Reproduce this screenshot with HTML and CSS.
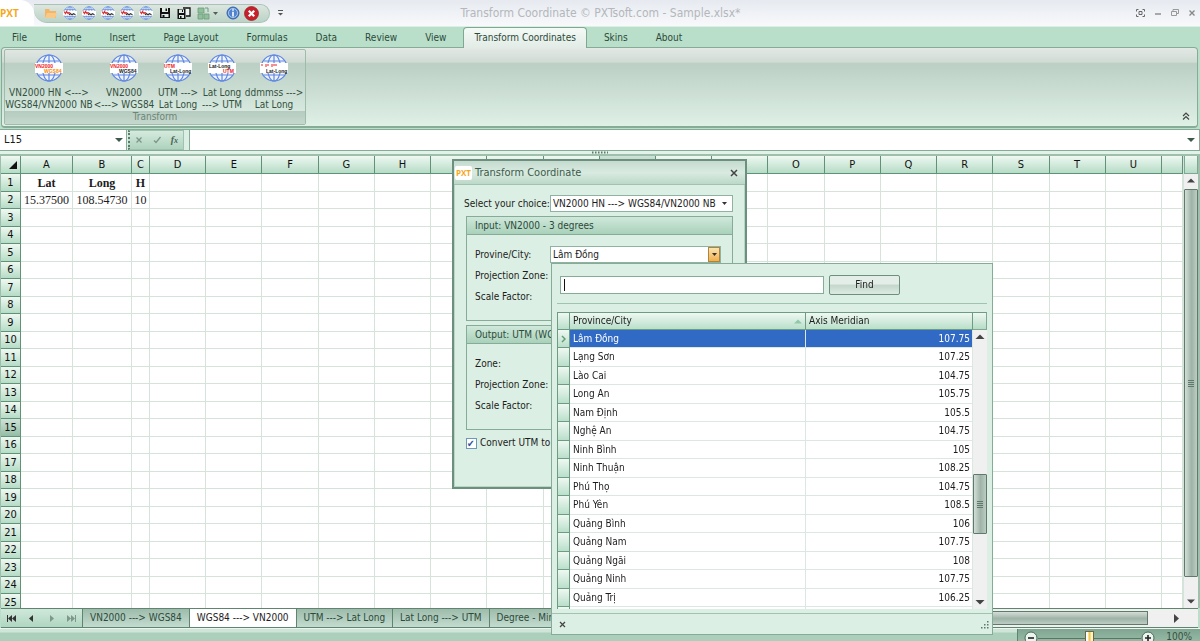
FILE: index.html
```html
<!DOCTYPE html>
<html lang="en">
<head>
    <meta charset="UTF-8">
    <meta name="viewport" content="width=device-width, initial-scale=1.0">
    <title>Transform Coordinate - Sample.xlsx</title>
    <link rel="stylesheet" href="styles.css">
</head>
<body>

    <!-- Shared icon shapes -->
    <svg class="defs" width="0" height="0">
        <symbol id="globe" viewBox="0 0 28 28">
            <circle cx="14" cy="14" r="13" fill="#eef4ff"/>
            <g fill="none" stroke="#5f86e0" stroke-width="1.2">
                <circle cx="14" cy="14" r="13"/>
                <ellipse cx="14" cy="14" rx="6.5" ry="13"/>
                <path d="M14 1v26M1 14h26M3.5 7h21M3.5 21h21"/>
            </g>
            <rect x="0" y="9" width="28" height="10" fill="#fff"/>
        </symbol>
        <symbol id="globe-small" viewBox="0 0 14 14">
            <circle cx="7" cy="7" r="6.3" fill="#eaf1fc"/>
            <g fill="none" stroke="#6d93dc" stroke-width=".8">
                <circle cx="7" cy="7" r="6.3"/>
                <ellipse cx="7" cy="7" rx="3" ry="6.3"/>
                <path d="M7 .7v12.6M1.7 3.5h10.6M1.7 10.5h10.6"/>
            </g>
            <rect x="0" y="5" width="14" height="4.5" fill="#fff"/>
            <path d="M1 5.5l1.5 2 1-2 1.5 2 1-1 1.5 1" fill="none" stroke="#d33" stroke-width="1.2"/>
            <path d="M6 8.8l1.5-1 1.5 1 1.5-1 2 1" fill="none" stroke="#333" stroke-width="1.2"/>
        </symbol>
    </svg>

    <!-- Title bar -->
    <header class="titlebar">
        <div class="logo">PXT</div>
        <div class="quick">
            <button aria-label="Open"><svg width="13" height="14" viewBox="0 0 13 14"><path d="M1 3h4l1 2h6v7H1z" fill="#f5b566"/><path d="M1 12l2-5h10l-2 5z" fill="#f9c988"/></svg></button>
            <button aria-label="VN2000 HN"><svg width="14" height="14"><use href="#globe-small"/></svg></button>
            <button aria-label="VN2000"><svg width="14" height="14"><use href="#globe-small"/></svg></button>
            <button aria-label="UTM"><svg width="14" height="14"><use href="#globe-small"/></svg></button>
            <button aria-label="Lat Long"><svg width="14" height="14"><use href="#globe-small"/></svg></button>
            <button aria-label="ddmmss"><svg width="14" height="14"><use href="#globe-small"/></svg></button>
            <button aria-label="Save"><svg width="12" height="12" viewBox="0 0 12 12"><path d="M1 1h10v10H1z" fill="#111"/><path d="M3 1h6v4H3zM2.500 7h7v3h-7z" fill="#dfeae4"/><path d="M6.500 1.500h1.500v2.500H6.500zM3.500 8h2v2h-2z" fill="#111"/></svg></button>
            <button aria-label="Save as"><svg width="14" height="13" viewBox="0 0 14 13"><path d="M6 1h7v8H9" fill="#eef4f0" stroke="#111" stroke-width="1.300"/><path d="M.5 2h8v10h-8z" fill="#111"/><path d="M2 2.500h5V6H2zM2 8h5v3H2z" fill="#dfeae4"/><path d="M5 3h1v2H5zM3 9h1.500v2H3z" fill="#111"/></svg></button>
            <button class="wide" aria-label="Skins"><svg width="22" height="14" viewBox="0 0 22 14"><path d="M1 2h6v5H1zM1 8h5v5H1zM7 8h5v5H7z" fill="#8fbf9c" stroke="#6c9c7a" stroke-width=".8"/><path d="M8 2l3 0 0 4" fill="none" stroke="#6c9c7a"/><path d="M16 6h5l-2.500 3z" fill="#4b6355"/></svg></button>
            <button aria-label="About"><svg width="14" height="14" viewBox="0 0 14 14"><circle cx="7" cy="7" r="6" fill="#4f83cf" stroke="#3562a8"/><circle cx="7" cy="7" r="4.500" fill="none" stroke="#c5d8f3" stroke-width=".8"/><path d="M6.200 3.300h1.600v1.500H6.200zM6.200 5.800h1.600v4.700H6.200z" fill="#fff"/></svg></button>
            <button aria-label="Exit"><svg width="15" height="15" viewBox="0 0 15 15"><circle cx="7.500" cy="7.500" r="7" fill="#c8202a" stroke="#8e2025" stroke-width=".7"/><path d="M4.800 4.800l5.400 5.400M10.200 4.800l-5.400 5.400" stroke="#fff" stroke-width="2.300"/></svg></button>
        </div>
        <button class="more" aria-label="Customize"><svg width="7" height="8" viewBox="0 0 7 8"><path d="M1 1.500h5" stroke="#555"/><path d="M1 4h5L3.500 6.500z" fill="#555"/></svg></button>
        <h1>Transform Coordinate © PXTsoft.com - Sample.xlsx*</h1>
        <div class="winbtns">
            <button aria-label="Full screen"><svg width="9" height="8" viewBox="0 0 9 8"><path d="M.5 2.500v-2h2M6.500.5h2v2M8.500 5.500v2h-2M2.500 7.500h-2v-2M3 2.500h3v3H3z" fill="none" stroke="#666"/></svg></button>
            <button aria-label="Minimize"><svg width="8" height="8" viewBox="0 0 8 8"><path d="M1 5h6" stroke="#888" stroke-width="1.400"/></svg></button>
            <button aria-label="Restore"><svg width="8" height="8" viewBox="0 0 8 8"><path d="M.5 2.500h5v4h-5zM2 2.500v-2h5.500v4h-2" fill="none" stroke="#999"/></svg></button>
            <button aria-label="Close"><svg width="8" height="8" viewBox="0 0 8 8"><path d="M1.500 1.500l5 5M6.500 1.500l-5 5" stroke="#888" stroke-width="1.400"/></svg></button>
        </div>
    </header>

    <!-- Ribbon tabs -->
    <nav class="tabs">
        <button>File</button>
        <button>Home</button>
        <button>Insert</button>
        <button>Page Layout</button>
        <button>Formulas</button>
        <button>Data</button>
        <button>Review</button>
        <button>View</button>
        <button class="active">Transform Coordinates</button>
        <button>Skins</button>
        <button>About</button>
    </nav>

    <!-- Ribbon -->
    <section class="ribbon">
        <div class="group">
            <div class="tools">
                <button class="tool t1">
                    <svg width="28" height="28" viewBox="0 0 28 28"><use href="#globe"/><text x="0" y="14" fill="#e22">VN2000</text><text x="9" y="19" fill="#f80">WGS84</text></svg>
                    <span>VN2000 HN &lt;---&gt;<br>WGS84/VN2000 NB</span>
                </button>
                <button class="tool t2">
                    <svg width="28" height="28" viewBox="0 0 28 28"><use href="#globe"/><text x="0" y="14" fill="#e22">VN2000</text><text x="9" y="19" fill="#222">WGS84</text></svg>
                    <span>VN2000<br>&lt;---&gt; WGS84</span>
                </button>
                <button class="tool t3">
                    <svg width="28" height="28" viewBox="0 0 28 28"><use href="#globe"/><text x="0" y="14" fill="#e22">UTM</text><text x="6" y="19" fill="#222">Lat-Long</text></svg>
                    <span>UTM ---&gt;<br>Lat Long</span>
                </button>
                <button class="tool t3">
                    <svg width="28" height="28" viewBox="0 0 28 28"><use href="#globe"/><text x="1" y="14" fill="#222">Lat-Long</text><text x="15" y="19" fill="#e22">UTM</text></svg>
                    <span>Lat Long<br>---&gt; UTM</span>
                </button>
                <button class="tool t4">
                    <svg width="28" height="28" viewBox="0 0 28 28"><use href="#globe"/><path d="M2 10v2M6 10v3M8 10v2M12 10v3M14 10v2M16 10v2" stroke="#e22"/><text x="6" y="19" fill="#222">Lat-Long</text></svg>
                    <span>ddmmss ---&gt;<br>Lat Long</span>
                </button>
            </div>
            <div class="caption">Transform</div>
        </div>
        <button class="collapse" aria-label="Collapse ribbon"><svg width="8" height="8" viewBox="0 0 8 8"><path d="M1 4l3-3 3 3M1 7.500l3-3 3 3" fill="none" stroke="#444" stroke-width="1.200"/></svg></button>
    </section>

    <!-- Formula bar -->
    <div class="formula">
        <div class="namebox">
            <input type="text" value="L15" aria-label="Name box">
            <svg width="8" height="5" viewBox="0 0 8 5"><path d="M0 0h8L4 4z" fill="#3d5a4a"/></svg>
        </div>
        <div class="fx">
            <button aria-label="Cancel"><svg width="8" height="8" viewBox="0 0 8 8"><path d="M1.500 1.500l5 5M6.500 1.500l-5 5" stroke="#7d9588" stroke-width="1.300"/></svg></button>
            <button aria-label="Enter"><svg width="8" height="8" viewBox="0 0 8 8"><path d="M1 4.500l2 2L7.500 1" fill="none" stroke="#7d9588" stroke-width="1.300"/></svg></button>
            <button class="fn" aria-label="Insert function">f<small>x</small></button>
        </div>
        <div class="expr">
            <input type="text" aria-label="Formula">
            <svg width="8" height="5" viewBox="0 0 8 5"><path d="M0 0h8L4 4z" fill="#3d5a4a"/></svg>
        </div>
    </div>
    <div class="splitter"><svg width="18" height="3" viewBox="0 0 18 3"><path d="M1 1.500h16" stroke="#5d7a6a" stroke-width="2" stroke-dasharray="1.500 1.500"/></svg></div>

    <!-- Sheet -->
    <main class="sheet">
        <div class="grid">
            <table>
                <colgroup id="cols"><col class="c-row"><col class="c-a"><col class="c-b"><col class="c-c"></colgroup>
                <thead><tr id="letters"><th class="corner"><svg width="8" height="8" viewBox="0 0 8 8"><path d="M8 0v8H0z" fill="#111"/></svg></th></tr></thead>
                <tbody id="cells"></tbody>
            </table>
        </div>
        <div class="vscroll">
            <div class="vhead"></div>
            <svg width="14" height="15" viewBox="0 0 14 15"><path d="M3 8.500h8L7 4.500z" fill="#444"/></svg>
            <div class="vthumb"></div>
            <svg class="down" width="14" height="10" viewBox="0 0 14 10"><path d="M3 3.500h8L7 7.500z" fill="#444"/></svg>
        </div>
    </main>

    <!-- Sheet tabs -->
    <div class="sheetbar">
        <div class="arrows">
            <button aria-label="First"><svg width="9" height="7" viewBox="0 0 9 7"><path d="M.5 0v7" stroke="#333"/><path d="M5 0v7L1 3.500zM9 0v7L5 3.500z" fill="#333"/></svg></button>
            <button aria-label="Previous"><svg width="9" height="7" viewBox="0 0 9 7"><path d="M6 0v7L2 3.500z" fill="#333"/></svg></button>
            <button aria-label="Next"><svg width="9" height="7" viewBox="0 0 9 7"><path d="M3 0v7l4-3.500z" fill="#7f978a"/></svg></button>
            <button aria-label="Last"><svg width="9" height="7" viewBox="0 0 9 7"><path d="M8.500 0v7" stroke="#7f978a"/><path d="M0 0v7l4-3.500zM4 0v7l4-3.500z" fill="#7f978a"/></svg></button>
        </div>
        <button class="stab">VN2000 ---&gt; WGS84</button>
        <button class="stab active">WGS84 ---&gt; VN2000</button>
        <button class="stab">UTM ---&gt; Lat Long</button>
        <button class="stab">Lat Long ---&gt; UTM</button>
        <button class="stab">Degree - Minute</button>
        <div class="hscroll">
            <div class="hthumb"></div>
            <svg width="6" height="9" viewBox="0 0 6 9"><path d="M1 0v9l5-4.500z" fill="#444"/></svg>
        </div>
    </div>

    <!-- Status bar -->
    <footer class="status">
        <div class="zoom">
            <button aria-label="Zoom out"><svg width="14" height="14" viewBox="0 0 14 14"><circle cx="7" cy="7" r="6" fill="#eaf5ee" stroke="#4c6b5a"/><path d="M4 7h6" stroke="#222" stroke-width="1.600"/></svg></button>
            <input type="range" min="0" max="200" value="100" aria-label="Zoom">
            <button aria-label="Zoom in"><svg width="14" height="14" viewBox="0 0 14 14"><circle cx="7" cy="7" r="6" fill="#eaf5ee" stroke="#4c6b5a"/><path d="M4 7h6M7 4v6" stroke="#222" stroke-width="1.600"/></svg></button>
            <span>100%</span>
        </div>
    </footer>

    <!-- Transform dialog -->
    <div class="dialog">
        <div class="dtitle">
            <span class="badge">PXT</span>
            <h2>Transform Coordinate</h2>
            <button aria-label="Close dialog"><svg width="8" height="8" viewBox="0 0 8 8"><path d="M1 1l6 6M7 1L1 7" stroke="#444" stroke-width="1.500"/></svg></button>
        </div>
        <div class="dbody">
            <div class="choice">
                <label for="choice">Select your choice:</label>
                <div class="combo">
                    <select id="choice"><option>VN2000 HN ---&gt; WGS84/VN2000 NB</option></select>
                    <svg width="5" height="3" viewBox="0 0 5 3"><path d="M0 0h5L2.500 3z" fill="#333"/></svg>
                </div>
            </div>
            <section class="box">
                <h3>Input: VN2000 - 3 degrees</h3>
                <div class="row">
                    <label for="city">Provine/City:</label>
                    <div class="combo open">
                        <select id="city"><option>Lâm Đồng</option></select>
                        <i><svg width="5" height="3" viewBox="0 0 5 3"><path d="M0 0h5L2.500 3z" fill="#333"/></svg></i>
                    </div>
                </div>
                <div class="row">Projection Zone:</div>
                <div class="row">Scale Factor:</div>
            </section>
            <section class="box">
                <h3>Output: UTM (WGS84)</h3>
                <div class="row">Zone:</div>
                <div class="row">Projection Zone:</div>
                <div class="row">Scale Factor:</div>
            </section>
            <label class="check"><input type="checkbox" checked>Convert UTM to Lat Long</label>
        </div>
    </div>

    <!-- Province lookup -->
    <div class="popup">
        <div class="search">
            <input type="text" aria-label="Search" autofocus>
            <button>Find</button>
        </div>
        <div class="list">
            <table>
                <colgroup><col class="p-mark"><col class="p-name"><col></colgroup>
                <thead><tr>
                    <th></th>
                    <th><div class="sort">Province/City<svg width="8" height="5" viewBox="0 0 8 5"><path d="M0 4.500h8L4 .5z" fill="#8fcaa8"/></svg></div></th>
                    <th>Axis Meridian</th>
                </tr></thead>
                <tbody id="provinces"></tbody>
            </table>
            <div class="pscroll">
                <div class="phead"></div>
                <svg width="14" height="12" viewBox="0 0 14 12"><path d="M2.500 9h9L7 4.500z" fill="#444"/></svg>
                <div class="pthumb"></div>
                <svg class="down" width="14" height="8" viewBox="0 0 14 8"><path d="M2.500 1h9L7 5.500z" fill="#444"/></svg>
            </div>
        </div>
        <div class="pfoot">
            <button aria-label="Clear"><svg width="7" height="7" viewBox="0 0 7 7"><path d="M1 1l5 5M6 1L1 6" stroke="#444" stroke-width="1.200"/></svg></button>
            <svg width="9" height="9" viewBox="0 0 9 9"><path d="M7 1h1.500v1.500H7zM4 4h1.500v1.500H4zM7 4h1.500v1.500H7zM1 7h1.500v1.500H1zM4 7h1.500v1.500H4zM7 7h1.500v1.500H7z" fill="#5d7a6a"/></svg>
        </div>
    </div>

    <script src="script.js"></script>
</body>
</html>
```
FILE: script.js
```js
const letters = "ABCDEFGHIJKLMNOPQRSTU".split("");
const values = {
    1: ["Lat", "Long", "H"],
    2: ["15.37500", "108.54730", "10"]
};
const provinces = [
    ["Lâm Đồng", "107.75"], ["Lạng Sơn", "107.25"], ["Lào Cai", "104.75"],
    ["Long An", "105.75"], ["Nam Định", "105.5"], ["Nghệ An", "104.75"],
    ["Ninh Bình", "105"], ["Ninh Thuận", "108.25"], ["Phú Thọ", "104.75"],
    ["Phú Yên", "108.5"], ["Quảng Bình", "106"], ["Quảng Nam", "107.75"],
    ["Quảng Ngãi", "108"], ["Quảng Ninh", "107.75"], ["Quảng Trị", "106.25"],
    ["", ""]
];

// Column headers
const head = document.getElementById("letters");
const cols = document.getElementById("cols");
letters.forEach((letter, i) => {
    const th = document.createElement("th");
    th.textContent = letter;
    if (letter === "L") th.className = "current";
    head.appendChild(th);
    if (i > 2) cols.appendChild(document.createElement("col"));
});
const last = document.createElement("col");
last.className = "c-last";
cols.appendChild(last);
head.appendChild(document.createElement("th"));

// Sheet rows
let html = "";
for (let r = 1; r <= 25; r++) {
    html += `<tr><th${r === 15 ? ' class="current"' : ""}>${r}</th>`;
    for (let c = 0; c <= letters.length; c++) {
        html += `<td>${(values[r] && values[r][c]) || ""}</td>`;
    }
    html += "</tr>";
}
document.getElementById("cells").innerHTML = html;

// Province list
const arrow = '<svg width="5" height="8" viewBox="0 0 5 8"><path d="M1 1l3 3-3 3" fill="none" stroke="#5f9a78" stroke-width="1.400"/></svg>';
document.getElementById("provinces").innerHTML = provinces.map((p, i) =>
    `<tr${i === 0 ? ' class="selected"' : ""}><th>${i === 0 ? arrow : ""}</th><td>${p[0]}</td><td>${p[1]}</td></tr>`
).join("");

document.querySelector(".search input").focus();
```
FILE: styles.css
```css
* {
    box-sizing: border-box;
}
body {
    margin: 0;
    height: 100vh;
    overflow: hidden;
    display: flex;
    flex-direction: column;
    background: #b9dfca;
    font-family: "DejaVu Sans Condensed", "Noto Sans", sans-serif;
    font-size: 10px;
    line-height: 12px;
    color: #1c1c1c;
}
button, input, select {
    font: inherit;
    color: inherit;
    background: none;
    border: none;
    padding: 0;
    margin: 0;
    outline: none;
}
svg {
    display: block;
    flex: none;
}
h1, h2, h3 {
    margin: 0;
    font-size: 10px;
    font-weight: normal;
}
.defs {
    position: absolute;
}

/* Title bar */
.titlebar {
    flex: none;
    height: 27px;
    display: flex;
    align-items: center;
    background: linear-gradient(#e6eaf0, #f8f9fb);
    border-bottom: 1px solid #dcefe4;
}
.logo {
    width: 34px;
    height: 26px;
    line-height: 26px;
    background: #fff;
    border-radius: 0 14px 0 0;
    color: #f5a81c;
    font-weight: bold;
    font-family: "Open Sans", sans-serif;
}
.quick {
    height: 19px;
    display: flex;
    align-items: center;
    gap: 4px;
    padding: 0 10px 0 9px;
    border: 1px solid #a9c4b5;
    border-left: none;
    border-radius: 0 10px 10px 14px;
    background: linear-gradient(#dbe6e0, #bcd3c6);
}
.quick button {
    width: 15px;
    display: flex;
    justify-content: center;
}
.quick .wide {
    width: 26px;
}
.more {
    margin-left: 7px;
}
.titlebar h1 {
    flex: 1;
    padding-right: 219px;
    text-align: center;
    font-size: 12px;
    color: #b4b7bb;
}
.winbtns {
    display: flex;
    gap: 9px;
    padding-right: 4px;
}

/* Ribbon tabs */
.tabs {
    flex: none;
    height: 20px;
    display: flex;
    padding-left: 1px;
    background: #b9dfca;
}
.tabs button {
    height: 21px;
    margin-right: 6px;
    padding: 0 10px;
    border: 1px solid transparent;
    border-bottom: none;
    color: #2c4a3a;
    position: relative;
    z-index: 1;
}
.tabs .active {
    border-color: #7fa892;
    border-radius: 4px 4px 0 0;
    background: linear-gradient(#f4faf6, #e2ebe5);
}

/* Ribbon */
.ribbon {
    flex: none;
    height: 81px;
    margin: 0 2px 1px 1px;
    padding: 1px 7px 1px 2px;
    display: flex;
    justify-content: space-between;
    align-items: flex-end;
    border: 1px solid #86ac97;
    border-bottom: 2px solid #86ac97;
    border-radius: 4px;
    background: linear-gradient(#e3e9e5 0, #d0dbd4 18%, #bccfc4 20%, #dff1e6 100%);
}
.group {
    height: 76px;
    padding: 0 1px;
    display: flex;
    flex-direction: column;
    border: 1px solid #9fbcab;
    border-radius: 2px;
}
.tools {
    flex: 1;
    display: flex;
}
.tool {
    display: flex;
    flex-direction: column;
    align-items: center;
    padding-top: 4px;
    gap: 5px;
    color: #33503f;
    white-space: nowrap;
}
.tool svg {
    overflow: visible;
}
.tool text {
    font-family: "Liberation Sans", sans-serif;
    font-size: 5px;
    font-weight: bold;
}
.t1 { width: 86px; }
.t2 { width: 64px; }
.t3 { width: 44px; }
.t4 { width: 60px; }
.caption {
    height: 13px;
    margin: 0 -1px;
    text-align: center;
    color: #6c8577;
    background: linear-gradient(#b5cbbf, #c5d8cd);
}
.collapse {
    margin-bottom: 5px;
}

/* Formula bar */
.formula {
    flex: none;
    height: 22px;
    display: flex;
    border-top: 1px solid #86ac97;
    border-bottom: 1px solid #86ac97;
    background: #dcefe4;
}
.namebox, .expr {
    display: flex;
    align-items: center;
    background: #fff;
}
.namebox {
    width: 127px;
    padding: 0 4px;
    border-right: 1px solid #86ac97;
}
.namebox input {
    width: 111px;
    font-size: 11px;
}
.fx {
    width: 56px;
    margin-left: 1px;
    margin-right: 5px;
    display: flex;
    align-items: center;
    justify-content: space-around;
    background: linear-gradient(#d5eadd, #aed3be);
    border: 1px solid #9fc3ae;
    border-left: 2px dotted #5d7a6a;
}
.fn {
    font-family: "Liberation Serif", serif;
    font-style: italic;
    font-weight: bold;
    color: #4b6355;
}
.fn small {
    font-size: 8px;
}
.expr {
    flex: 1;
    padding-right: 4px;
    border-left: 1px solid #86ac97;
    border-right: 1px solid #86ac97;
}
.expr input {
    flex: 1;
}
.splitter {
    flex: none;
    height: 5px;
    display: flex;
    justify-content: center;
    border-bottom: 2px solid #9dbfac;
    background: #e3f2e9;
}

/* Sheet */
.sheet {
    flex: 1;
    min-height: 0;
    display: flex;
    padding: 0 2px 0 1px;
    background: #9dbfac;
}
.grid {
    flex: 1;
    overflow: hidden;
    background: #fff;
}
.grid table {
    width: 100%;
    table-layout: fixed;
    border-collapse: separate;
    border-spacing: 0;
}
.c-row { width: 20px; }
.c-a { width: 52px; }
.c-b { width: 59px; }
.c-c { width: 18px; }
.c-last { width: 21px; }
.grid th {
    padding: 0;
    font-size: 11px;
    font-weight: normal;
    color: #111;
    border-right: 1px solid #5f9277;
    border-bottom: 1px solid #5f9277;
    background: linear-gradient(#eff8f2, #b5dcc6);
}
.grid thead th {
    height: 18px;
}
.grid th.current {
    background: linear-gradient(#cfe2d7, #93bda5);
}
.corner svg {
    margin-left: 8px;
}
.grid td {
    height: 17px;
    padding: 0;
    text-align: center;
    font-family: "Liberation Serif", serif;
    font-size: 12px;
    border-right: 1px solid #d5e3da;
    border-bottom: 1px solid #d5e3da;
}
.grid tbody tr:nth-child(odd) td {
    height: 18px;
}
.grid tbody tr:first-child td {
    font-weight: bold;
}
.vscroll {
    flex: none;
    width: 15px;
    display: flex;
    flex-direction: column;
    border-left: 1px solid #d5e3da;
    background: #f0f0f0;
}
.vhead, .phead {
    height: 18px;
    border: 1px solid #7fa892;
    border-top: none;
    background: linear-gradient(#eff8f2, #b5dcc6);
}
.vthumb, .pthumb {
    border: 1px solid #5f7a6b;
    border-radius: 1px;
    background:
        repeating-linear-gradient(#5f7a6b 0 1px, transparent 1px 2px) center / 6px 7px no-repeat,
        linear-gradient(90deg, #d3ded8, #9fb3a8 55%, #bccdc4);
}
.vthumb {
    flex: 1;
}
.vscroll .down {
    margin: 19px 0 2px;
}

/* Sheet tabs */
.sheetbar {
    flex: none;
    height: 20px;
    display: flex;
    margin: 0 2px 0 1px;
    border-top: 1px solid #5f8570;
    border-bottom: 1px solid #5f8570;
    background: #dcefe4;
}
.arrows {
    width: 81px;
    display: flex;
    align-items: center;
    justify-content: space-around;
    background: linear-gradient(#cfe8da, #b0d6c1);
}
.stab {
    padding: 0 7px;
    color: #2c4a3a;
    white-space: nowrap;
    border-left: 1px solid #5f8570;
    background: linear-gradient(#9dbbab, #c3dccf);
}
.stab.active {
    background: #fff;
    color: #1c1c1c;
}
.hscroll {
    flex: 1;
    display: flex;
    align-items: center;
    padding-right: 19px;
    background: #f0f0f0;
}
.hthumb {
    flex: 1;
    height: 14px;
    margin-right: 25px;
    border: 1px solid #5f7a6b;
    background: linear-gradient(#d3ded8, #9fb3a8 55%, #bccdc4);
}

/* Status bar */
.status {
    flex: none;
    height: 13px;
    display: flex;
    justify-content: flex-end;
    align-items: flex-start;
    border-top: 1px solid #eaf6ef;
    background: linear-gradient(#cfe5d8 0 3px, #abcfbb 4px);
    overflow: hidden;
}
.zoom {
    width: 183px;
    height: 20px;
    padding: 2px 8px 0 6px;
    display: flex;
    align-items: flex-start;
    border-left: 1px solid #5f8570;
    background: linear-gradient(#7fa590, #a5c6b3);
}
.zoom input {
    flex: 1;
    min-width: 0;
    height: 14px;
    appearance: none;
    background: linear-gradient(#567863, #567863) center / 100% 1px no-repeat;
}
.zoom input::-webkit-slider-thumb {
    appearance: none;
    width: 9px;
    height: 14px;
    border: 1px solid #6b6a45;
    background: linear-gradient(90deg, #fff 30%, #f2c94b 40% 60%, #fdf3c4 70%);
}
.zoom span {
    margin-left: 11px;
    color: #33503f;
}

/* Transform dialog */
.dialog {
    position: absolute;
    left: 452px;
    top: 159px;
    width: 295px;
    height: 330px;
    border: 2px solid #6d8f7d;
    background: #dcefe4;
    box-shadow: inset 0 0 0 1px #b8d6c5;
}
.dtitle {
    height: 24px;
    display: flex;
    align-items: center;
    padding: 0 7px 0 1px;
    gap: 3px;
    border-bottom: 1px solid #9fc3ae;
    background: linear-gradient(#c5dacf, #d9ebe1 50%, #bcd8c8);
}
.badge {
    padding: 0 1px;
    background: #fff;
    border-radius: 2px;
    color: #f5a81c;
    font-size: 8px;
    font-weight: bold;
    line-height: 14px;
    font-family: "Open Sans", sans-serif;
}
.dtitle h2 {
    flex: 1;
    font-size: 11px;
    color: #3c5a4a;
}
.dbody {
    padding: 10px 12px 0 10px;
    display: flex;
    flex-direction: column;
}
.choice {
    display: flex;
    align-items: center;
    justify-content: space-between;
    margin-bottom: 4px;
    white-space: nowrap;
}
.combo {
    width: 185px;
    height: 17px;
    display: flex;
    align-items: center;
    padding: 0 5px 0 2px;
    border: 1px solid #8fb3a0;
    background: #fff;
}
.combo select {
    flex: 1;
    min-width: 0;
    appearance: none;
}
.combo.open {
    width: 171px;
    padding-right: 0;
}
.combo i {
    width: 12px;
    height: 15px;
    display: flex;
    align-items: center;
    justify-content: center;
    border: 1px solid #b0843f;
    background: linear-gradient(#fbe3ae, #f0b04f);
}
.box {
    margin: 0 0 4px 2px;
    padding-bottom: 13px;
    border: 1px solid #86ac97;
}
.box h3 {
    height: 18px;
    margin-bottom: 9px;
    padding: 3px 8px;
    color: #2c4a3a;
    border-bottom: 1px solid #86ac97;
    background: linear-gradient(#cfe8da, #a9d1ba);
}
.row {
    height: 21px;
    display: flex;
    align-items: center;
    justify-content: space-between;
    padding: 0 11px 0 8px;
    white-space: nowrap;
}
.check {
    display: flex;
    align-items: center;
    gap: 3px;
    margin: 3px 0 0 2px;
    white-space: nowrap;
}
.check input {
    width: 11px;
    height: 11px;
    appearance: none;
    border: 1px solid #6f98b8;
    background: #fff;
}
.check input:checked::before {
    content: "✔";
    display: block;
    font-size: 10px;
    line-height: 9px;
    color: #31519c;
}

/* Province lookup */
.popup {
    position: absolute;
    left: 551px;
    top: 263px;
    width: 442px;
    height: 372px;
    display: flex;
    flex-direction: column;
    border: 1px solid #86ac97;
    background: #dcefe4;
}
.search {
    display: flex;
    align-items: center;
    gap: 5px;
    margin: 0 5px 8px;
    padding: 11px 3px 8px 3px;
    border-bottom: 1px solid #9fc3ae;
}
.search input {
    width: 264px;
    height: 18px;
    padding-left: 3px;
    border: 1px solid #86ac97;
    background: #fff;
}
.search input:focus {
    caret-color: transparent;
    background: linear-gradient(#111, #111) 3px center / 1px 12px no-repeat, #fff;
}
.search button {
    width: 71px;
    height: 20px;
    border: 1px solid #6d8f7d;
    border-radius: 2px;
    background: linear-gradient(#e4eee8 45%, #c3d6cc 50%, #dcebe2);
}
.list {
    height: 297px;
    margin: 0 5px;
    display: flex;
    align-items: flex-start;
    overflow: hidden;
    background: #fff;
}
.list table {
    flex: 1;
    table-layout: fixed;
    border-collapse: separate;
    border-spacing: 0;
}
.p-mark { width: 13px; }
.p-name { width: 236px; }
.list th {
    padding: 0 3px;
    font-weight: normal;
    text-align: left;
    border-right: 1px solid #6d9c82;
    border-bottom: 1px solid #6d9c82;
    background: linear-gradient(#eff8f2, #b9dfca);
}
.list thead th {
    height: 18px;
    border-top: 1px solid #6d9c82;
}
.list th:first-child {
    border-left: 1px solid #6d9c82;
}
.sort {
    display: flex;
    align-items: center;
    justify-content: space-between;
}
.list td {
    height: 18px;
    padding: 0 2px 0 3px;
    border-right: 1px solid #dde7e1;
    border-bottom: 1px solid #dde7e1;
}
.list tbody tr:nth-child(even) td {
    height: 19px;
}
.list td:last-child {
    text-align: right;
}
.list .selected td {
    color: #fff;
    background: #316ac5;
}
.pscroll {
    width: 14px;
    height: 297px;
    display: flex;
    flex-direction: column;
    background: #f0f0f0;
}
.phead {
    border-top: 1px solid #6d9c82;
    border-left: none;
}
.pthumb {
    height: 60px;
    margin-top: auto;
}
.pscroll .down {
    margin: 65px 0 2px;
}
.pfoot {
    flex: 1;
    display: flex;
    align-items: center;
    justify-content: space-between;
    margin-top: 4px;
    padding: 0 3px 0 7px;
    border-top: 1px solid #9fc3ae;
}
```
